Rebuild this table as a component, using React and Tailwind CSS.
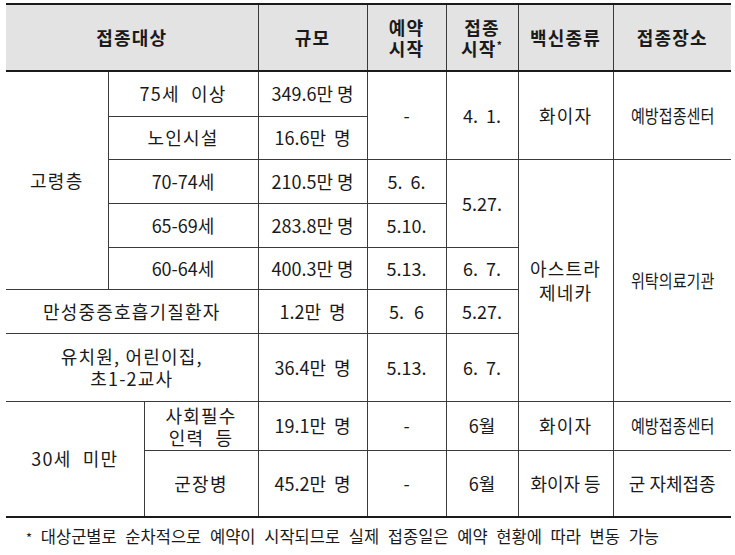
import React from "react";

const line = "border border-[#3a3a3a]";
const td = `${line} p-0 text-center align-middle whitespace-nowrap`;
const th = `${line} border-t-2 border-t-[#1a1a1a] border-b-2 border-b-[#1a1a1a] bg-[#e3e3e3] p-0 text-center align-middle font-bold leading-[21px]`;
const ko = "tracking-[1.2px]";
const narrow = "inline-block scale-x-[0.84]";

export default function App() {
  return (
    <div className="w-[735px] h-[555px] bg-white pt-[3px] pl-[6px] text-[18px] text-[#1a1a1a] font-['Noto_Sans_CJK_KR','Noto_Sans',sans-serif]">
      <table className="w-[725px] table-fixed border-collapse border-t-2 border-t-[#1a1a1a]">
        <colgroup>
          <col className="w-[102px]" />
          <col className="w-[36px]" />
          <col className="w-[114px]" />
          <col className="w-[109px]" />
          <col className="w-[79px]" />
          <col className="w-[72px]" />
          <col className="w-[95px]" />
          <col className="w-[118px]" />
        </colgroup>
        <thead>
          <tr className="h-[67px]">
            <th colSpan={3} className={`${th} border-l-0 ${ko}`}>접종대상</th>
            <th className={`${th} ${ko}`}>규모</th>
            <th className={`${th} ${ko}`}>예약<br />시작</th>
            <th className={`${th} ${ko}`}>
              접종<br />시작<span className="relative -top-[7px] text-[10px] leading-none">*</span>
            </th>
            <th className={`${th} ${ko}`}>백신종류</th>
            <th className={`${th} border-r-0 ${ko}`}>접종장소</th>
          </tr>
        </thead>
        <tbody>
          <tr className="h-[45px]">
            <td rowSpan={5} className={`${td} border-l-0 ${ko}`}>고령층</td>
            <td colSpan={2} className={`${td} ${ko} [word-spacing:6px]`}>75세 이상</td>
            <td className={td}>349.6만&nbsp;명</td>
            <td rowSpan={2} className={td}>-</td>
            <td rowSpan={2} className={`${td} [word-spacing:4px]`}>4. 1.</td>
            <td rowSpan={2} className={`${td} ${ko}`}>화이자</td>
            <td rowSpan={2} className={`${td} border-r-0`}><span className={narrow}>예방접종센터</span></td>
          </tr>
          <tr className="h-[43px]">
            <td colSpan={2} className={`${td} ${ko}`}>노인시설</td>
            <td className={td}>16.6만&nbsp; 명</td>
          </tr>
          <tr className="h-[44px]">
            <td colSpan={2} className={td}>70-74세</td>
            <td className={td}>210.5만&nbsp;명</td>
            <td className={`${td} [word-spacing:4px]`}>5. 6.</td>
            <td rowSpan={2} className={td}>5.27.</td>
            <td rowSpan={5} className={`${td} ${ko} leading-[24px]`}>아스트라<br />제네카</td>
            <td rowSpan={5} className={`${td} border-r-0`}><span className={narrow}>위탁의료기관</span></td>
          </tr>
          <tr className="h-[44px]">
            <td colSpan={2} className={td}>65-69세</td>
            <td className={td}>283.8만&nbsp;명</td>
            <td className={td}>5.10.</td>
          </tr>
          <tr className="h-[42px]">
            <td colSpan={2} className={td}>60-64세</td>
            <td className={td}>400.3만&nbsp;명</td>
            <td className={td}>5.13.</td>
            <td className={`${td} [word-spacing:4px]`}>6. 7.</td>
          </tr>
          <tr className="h-[44px]">
            <td colSpan={3} className={`${td} border-l-0 ${ko}`}>만성중증호흡기질환자</td>
            <td className={td}>1.2만&nbsp; 명</td>
            <td className={`${td} [word-spacing:6px]`}>5. 6</td>
            <td className={td}>5.27.</td>
          </tr>
          <tr className="h-[68px]">
            <td colSpan={3} className={`${td} border-l-0 ${ko} leading-[22px]`}>유치원, 어린이집,<br />초1-2교사</td>
            <td className={td}>36.4만&nbsp; 명</td>
            <td className={td}>5.13.</td>
            <td className={`${td} [word-spacing:4px]`}>6. 7.</td>
          </tr>
          <tr className="h-[49px]">
            <td rowSpan={2} colSpan={2} className={`${td} border-l-0 border-b-2 border-b-[#1a1a1a] ${ko} [word-spacing:6px]`}>30세 미만</td>
            <td className={`${td} ${ko} leading-[22px] [word-spacing:6px]`}>사회필수<br />인력 등</td>
            <td className={td}>19.1만&nbsp; 명</td>
            <td className={td}>-</td>
            <td className={td}>6월</td>
            <td className={`${td} ${ko}`}>화이자</td>
            <td className={`${td} border-r-0`}><span className={narrow}>예방접종센터</span></td>
          </tr>
          <tr className="h-[67px]">
            <td className={`${td} border-b-2 border-b-[#1a1a1a] ${ko}`}>군장병</td>
            <td className={`${td} border-b-2 border-b-[#1a1a1a]`}>45.2만&nbsp; 명</td>
            <td className={`${td} border-b-2 border-b-[#1a1a1a]`}>-</td>
            <td className={`${td} border-b-2 border-b-[#1a1a1a]`}>6월</td>
            <td className={`${td} border-b-2 border-b-[#1a1a1a]`}>화이자 등</td>
            <td className={`${td} border-r-0 border-b-2 border-b-[#1a1a1a]`}>군 자체접종</td>
          </tr>
        </tbody>
      </table>
      <p className="mt-[6px] pl-[20px] text-[16.5px] leading-[24px] [word-spacing:5px] whitespace-nowrap">
        <span className="text-[13px]">*</span> 대상군별로 순차적으로 예약이 시작되므로 실제 접종일은 예약 현황에 따라 변동 가능
      </p>
    </div>
  );
}
